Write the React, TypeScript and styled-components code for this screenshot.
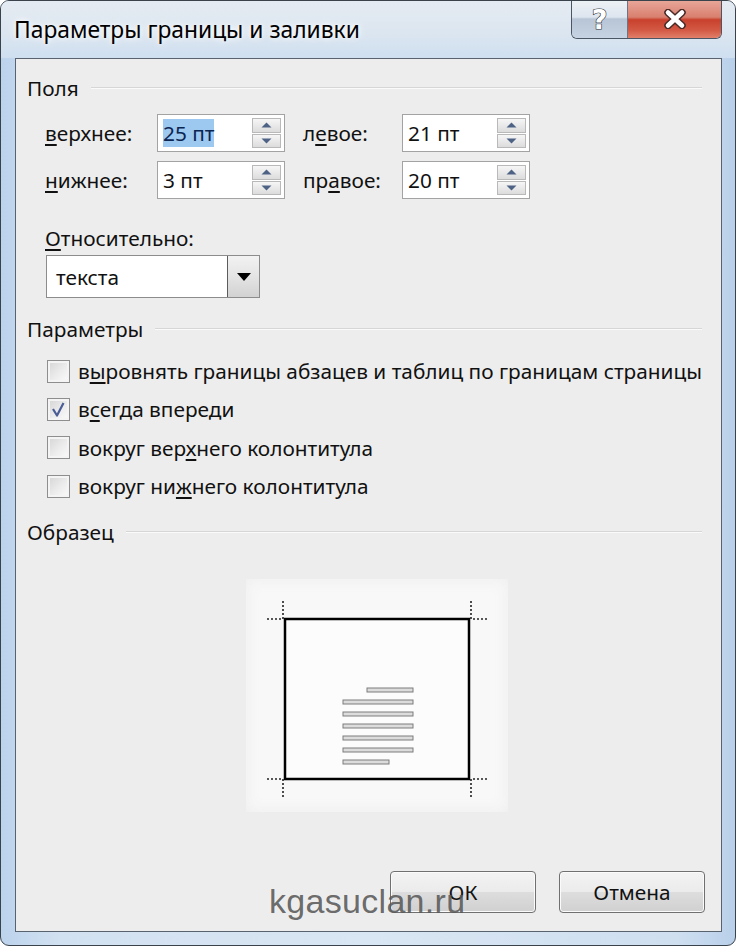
import React from 'react';
import styled, { createGlobalStyle } from 'styled-components';

const GlobalStyle = createGlobalStyle`
  html, body {
    margin: 0;
    padding: 0;
    background: #ffffff;
  }
  body {
    font-family: 'Noto Sans', 'Open Sans', sans-serif;
    color: #111;
  }
`;

type SpinProps = { value: string; selected?: boolean };

const SpinBox: React.FC<SpinProps> = ({ value, selected }) => (
  <SpinWrap>
    <SpinText>{selected ? <Selection>{value}</Selection> : value}</SpinText>
    <SpinButtons>
      <SpinButton>
        <svg width="11" height="6" viewBox="0 0 11 6">
          <path d="M0.5 5.5 L5.5 0.5 L10.5 5.5 Z" fill="#4d6285" />
        </svg>
      </SpinButton>
      <SpinButton>
        <svg width="11" height="6" viewBox="0 0 11 6">
          <path d="M0.5 0.5 L5.5 5.5 L10.5 0.5 Z" fill="#4d6285" />
        </svg>
      </SpinButton>
    </SpinButtons>
  </SpinWrap>
);

const CheckRow: React.FC<{ checked?: boolean; children: React.ReactNode }> = ({ checked, children }) => (
  <Row>
    <Box>
      {checked && (
        <svg width="17" height="17" viewBox="0 0 17 17">
          <path d="M3 8 L7 14.5 L13.5 2" stroke="#4a5d96" strokeWidth="2.2" fill="none" strokeLinejoin="round" />
        </svg>
      )}
    </Box>
    <CheckLabel>{children}</CheckLabel>
  </Row>
);

const Preview: React.FC = () => {
  const lines = [
    [121, 167],
    [97, 167],
    [97, 167],
    [97, 167],
    [97, 167],
    [97, 167],
    [97, 143],
  ];
  return (
    <PreviewBox>
      <svg width="262" height="233" viewBox="0 0 262 233">
        <rect x="39" y="40" width="184" height="160" fill="#fcfcfc" stroke="#000" strokeWidth="2.5" />
        <g stroke="#222" strokeWidth="1.6" strokeDasharray="2 2" fill="none">
          <path d="M37 22 V40 H21" />
          <path d="M225 22 V40 H242" />
          <path d="M37 218 V200 H21" />
          <path d="M225 218 V200 H242" />
        </g>
        {lines.map(([x1, x2], i) => (
          <rect key={i} x={x1} y={109 + i * 12} width={x2 - x1} height="4" fill="#dcdcdc" stroke="#7c7c7c" strokeWidth="1" />
        ))}
      </svg>
    </PreviewBox>
  );
};

export default function App() {
  return (
    <>
      <GlobalStyle />
      <Window>
        <TitleBar>
          <Title>Параметры границы и заливки</Title>
          <Caption>
            <HelpBtn>?</HelpBtn>
            <CloseBtn>
              <svg width="26" height="20" viewBox="0 0 26 20">
                <path d="M6 3.5 L20 16.5 M20 3.5 L6 16.5" stroke="#4a2a26" strokeWidth="7.5" strokeLinecap="round" />
                <path d="M6 3.5 L20 16.5 M20 3.5 L6 16.5" stroke="#ffffff" strokeWidth="4.5" strokeLinecap="round" />
              </svg>
            </CloseBtn>
          </Caption>
        </TitleBar>

        <Client>
          <GroupHeader $top={17}>
            <span>Поля</span>
            <Rule />
          </GroupHeader>

          <FieldGrid>
            <Label><Key>в</Key>ерхнее:</Label>
            <SpinBox value="25 пт" selected />
            <Label $indent>л<Key>е</Key>вое:</Label>
            <SpinBox value="21 пт" />
            <Label><Key>н</Key>ижнее:</Label>
            <SpinBox value="3 пт" />
            <Label $indent>пр<Key>а</Key>вое:</Label>
            <SpinBox value="20 пт" />
          </FieldGrid>

          <Relative>
            <Label><Key>О</Key>тносительно:</Label>
            <Select>
              <SelectText>текста</SelectText>
              <SelectButton>
                <svg width="14" height="8" viewBox="0 0 14 8">
                  <path d="M0 0 H14 L7 8 Z" fill="#000" />
                </svg>
              </SelectButton>
            </Select>
          </Relative>

          <GroupHeader $top={19}>
            <span>Параметры</span>
            <Rule />
          </GroupHeader>

          <CheckList>
            <CheckRow>в<Key>ы</Key>ровнять границы абзацев и таблиц по границам страницы</CheckRow>
            <CheckRow checked>в<Key>с</Key>егда впереди</CheckRow>
            <CheckRow>вокруг вер<Key>х</Key>него колонтитула</CheckRow>
            <CheckRow>вокруг ни<Key>ж</Key>него колонтитула</CheckRow>
          </CheckList>

          <GroupHeader $top={15}>
            <span>Образец</span>
            <Rule />
          </GroupHeader>

          <Preview />

          <Buttons>
            <DialogButton>ОК</DialogButton>
            <DialogButton>Отмена</DialogButton>
          </Buttons>
        </Client>

        <Watermark>kgasuclan.ru</Watermark>
      </Window>
    </>
  );
}

const Window = styled.div`
  position: relative;
  width: 736px;
  height: 946px;
  box-sizing: border-box;
  display: flex;
  flex-direction: column;
  border: 1px solid #3a424c;
  border-radius: 9px;
  background: linear-gradient(90deg, #bcd3ec 0%, #d2e1f1 8%, #d9e6f3 50%, #cfdff0 92%, #b9d0ea 100%);
  overflow: hidden;
`;

const TitleBar = styled.div`
  height: 57px;
  display: flex;
  align-items: flex-start;
  justify-content: space-between;
  background: linear-gradient(180deg, #e5ebf2 0%, #dce6f0 55%, #cfdff0 100%);
`;

const Title = styled.div`
  margin: 14px 0 0 13px;
  font-size: 22.8px;
  line-height: 30px;
  color: #000;
  text-shadow: 0 0 10px rgba(255, 255, 255, 0.95), 0 0 4px rgba(255, 255, 255, 0.9);
`;

const Caption = styled.div`
  display: flex;
  margin: -1px 13px 0 0;
  height: 38px;
  border: 1px solid #4b5563;
  border-top: none;
  border-radius: 0 0 6px 6px;
  overflow: hidden;
`;

const CapButton = styled.div`
  display: flex;
  align-items: center;
  justify-content: center;
`;

const HelpBtn = styled(CapButton)`
  width: 55px;
  border-right: 1px solid #6b7585;
  background: linear-gradient(180deg, #eef2f6 0%, #dde5ee 45%, #b7c5d6 50%, #c6d3e2 100%);
  color: #fff;
  font: bold 27px 'DejaVu Sans', sans-serif;
  -webkit-text-stroke: 1.2px #2c2f35;
  paint-order: stroke fill;
`;

const CloseBtn = styled(CapButton)`
  width: 93px;
  background: linear-gradient(180deg, #e9a89b 0%, #d9806f 45%, #c8412d 52%, #d35a45 80%, #e2806a 100%);
`;

const Client = styled.div`
  flex: 1;
  margin: 0 13px 13px 14px;
  border: 1px solid #59636f;
  background: #ededed;
  padding: 0 19px 0 11px;
  display: flex;
  flex-direction: column;
  font-size: 20.8px;
`;

const GroupHeader = styled.div<{ $top: number }>`
  display: flex;
  align-items: center;
  gap: 12px;
  height: 24px;
  margin-top: ${p => p.$top}px;
  line-height: 24px;
`;

const Rule = styled.div`
  flex: 1;
  height: 1px;
  background: #d6d6d6;
  border-bottom: 1px solid #fafafa;
`;

const FieldGrid = styled.div`
  display: grid;
  grid-template-columns: 112px 128px 117px 128px;
  grid-auto-rows: 38px;
  row-gap: 9px;
  margin: 14px 0 0 18px;
`;

const Label = styled.div<{ $indent?: boolean }>`
  display: flex;
  align-items: center;
  padding-left: ${p => (p.$indent ? '18px' : '0')};
  line-height: 26px;
`;

const Key = styled.span`
  text-decoration: underline;
  text-underline-offset: 3px;
`;

const SpinWrap = styled.div`
  display: flex;
  align-items: center;
  box-sizing: border-box;
  border: 1px solid #a3a3a3;
  background: #fff;
  padding: 3px 3px 3px 5px;
`;

const SpinText = styled.div`
  flex: 1;
  line-height: 26px;
`;

const Selection = styled.span`
  background: #9dc8f0;
  color: #0b2552;
`;

const SpinButtons = styled.div`
  display: flex;
  flex-direction: column;
  width: 29px;
  height: 100%;
  gap: 1px;
`;

const SpinButton = styled.div`
  flex: 1;
  display: flex;
  align-items: center;
  justify-content: center;
  box-sizing: border-box;
  border: 1px solid #b9b9b9;
  background: linear-gradient(180deg, #f6f6f6 0%, #e9e9e9 50%, #dcdcdc 100%);
`;

const Relative = styled.div`
  display: flex;
  flex-direction: column;
  align-items: flex-start;
  gap: 4px;
  margin: 26px 0 0 18px;
`;

const Select = styled.div`
  display: flex;
  width: 214px;
  height: 43px;
  box-sizing: border-box;
  border: 1px solid #8c8c8c;
  background: #fff;
  margin-left: 1px;
`;

const SelectText = styled.div`
  flex: 1;
  display: flex;
  align-items: center;
  padding-left: 9px;
`;

const SelectButton = styled.div`
  width: 32px;
  display: flex;
  align-items: center;
  justify-content: center;
  box-sizing: border-box;
  border-left: 1px solid #5c5c5c;
  background: linear-gradient(180deg, #f2f2f2 0%, #e4e4e4 50%, #d2d2d2 100%);
`;

const CheckList = styled.div`
  display: flex;
  flex-direction: column;
  margin: 11px 0 0 20px;
`;

const Row = styled.div`
  height: 38.3px;
  display: flex;
  align-items: center;
`;

const Box = styled.div`
  width: 23px;
  height: 23px;
  box-sizing: border-box;
  border: 1px solid #8e8e8e;
  box-shadow: inset 0 0 0 2px #f4f4f4;
  background: linear-gradient(135deg, #d4d4d4 0%, #ececec 55%, #fbfbfb 100%);
  display: flex;
  align-items: center;
  justify-content: center;
`;

const CheckLabel = styled.span`
  margin-left: 8px;
  line-height: 26px;
`;

const PreviewBox = styled.div`
  margin: 35px 0 0 219px;
  width: 262px;
  height: 233px;
  background: #f8f8f8;
  box-shadow: inset 0 0 14px rgba(236, 236, 236, 0.9);
`;

const Buttons = styled.div`
  margin: auto -3px 18px 0;
  display: flex;
  justify-content: flex-end;
  gap: 23px;
`;

const DialogButton = styled.div`
  width: 146px;
  height: 42px;
  box-sizing: border-box;
  display: flex;
  align-items: center;
  justify-content: center;
  border: 1px solid #707070;
  border-radius: 4px;
  box-shadow: inset 0 0 0 1px #fbfbfb;
  background: linear-gradient(180deg, #f3f3f3 0%, #ebebeb 49%, #dddddd 51%, #d0d0d0 100%);
`;

const Watermark = styled.div`
  position: absolute;
  left: 268px;
  top: 880px;
  font-family: 'Liberation Sans', Arial, sans-serif;
  font-size: 34px;
  line-height: 40px;
  color: rgba(90, 90, 90, 0.9);
  letter-spacing: 0.3px;
`;
